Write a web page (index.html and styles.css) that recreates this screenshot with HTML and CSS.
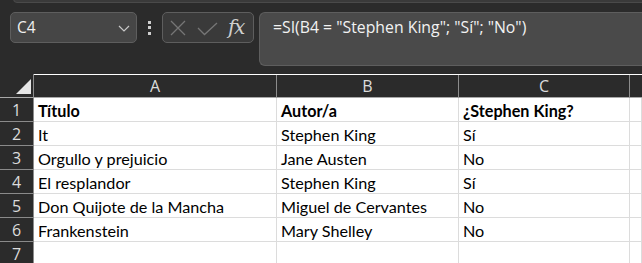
FILE: index.html
```html
<!DOCTYPE html>
<html lang="es">
<head>
<meta charset="utf-8">
<link rel="stylesheet" href="styles.css">
</head>
<body>
<div class="app">
  <div class="ribbon-edge"></div>
  <div class="toolbar">
    <div class="namebox">
      <span class="ref">C4</span>
      <svg class="chev" width="12" height="7" viewBox="0 0 12 7"><path d="M1 1 L6 6 L11 1" fill="none" stroke="#c8c8c8" stroke-width="1.2"/></svg>
    </div>
    <div class="dots"><span></span><span></span><span></span></div>
    <div class="fxbox">
      <svg class="ic-x" width="16" height="16" viewBox="0 0 16 16"><path d="M1 1 L15 15 M15 1 L1 15" stroke="#767676" stroke-width="1.3" fill="none"/></svg>
      <svg class="ic-ok" width="21" height="14" viewBox="0 0 21 14"><path d="M1 6 L7.5 12.5 L20 1" stroke="#767676" stroke-width="1.3" fill="none"/></svg>
      <span class="fx">fx</span>
    </div>
    <div class="formula">=SI(B4 = "Stephen King"; "Sí"; "No")</div>
  </div>
  <div class="grid">
    <div class="corner"><div class="tri"></div></div>
    <div class="ch">A</div>
    <div class="ch">B</div>
    <div class="ch">C</div>
    <div class="ch last"></div>

    <div class="rh">1</div>
    <div class="c b">Título</div>
    <div class="c b">Autor/a</div>
    <div class="c b">¿Stephen King?</div>
    <div class="c"></div>

    <div class="rh">2</div>
    <div class="c">It</div>
    <div class="c">Stephen King</div>
    <div class="c">Sí</div>
    <div class="c"></div>

    <div class="rh">3</div>
    <div class="c">Orgullo y prejuicio</div>
    <div class="c">Jane Austen</div>
    <div class="c">No</div>
    <div class="c"></div>

    <div class="rh">4</div>
    <div class="c">El resplandor</div>
    <div class="c">Stephen King</div>
    <div class="c">Sí</div>
    <div class="c"></div>

    <div class="rh">5</div>
    <div class="c">Don Quijote de la Mancha</div>
    <div class="c">Miguel de Cervantes</div>
    <div class="c">No</div>
    <div class="c"></div>

    <div class="rh">6</div>
    <div class="c">Frankenstein</div>
    <div class="c">Mary Shelley</div>
    <div class="c">No</div>
    <div class="c"></div>

    <div class="rh">7</div>
    <div class="c"></div>
    <div class="c"></div>
    <div class="c"></div>
    <div class="c"></div>
  </div>
</div>
</body>
</html>
```
FILE: styles.css
```css
* { box-sizing: border-box; }
html, body { margin: 0; padding: 0; background: #2b2b2b; overflow: hidden; }
.app { width: 642px; height: 263px; position: relative; background: #2b2b2b; overflow: hidden; }
.ribbon-edge {
  position: absolute; left: 13px; top: -6px; right: -6px; height: 9px;
  background: #3a3a3a; border: 1px solid #4a4a4a; border-radius: 4px;
}
.toolbar {
  height: 74px; display: flex; align-items: flex-start;
  padding: 12px 0 0 10px;
  font-family: "Open Sans", "Noto Sans", sans-serif;
}
.namebox {
  width: 127px; height: 31px; border: 1px solid #5e5e5e; border-radius: 5px;
  background: #464646; display: flex; align-items: center; justify-content: space-between;
  padding: 0 6px 0 6px; color: #f0f0f0; font-size: 15.5px;
}
.namebox .ref { margin-top: -1px; }
.chev { margin-top: 2px; }
.dots { width: 25px; height: 31px; display: flex; flex-direction: column; align-items: center; justify-content: center; gap: 2.5px; }
.dots span { width: 3px; height: 3px; background: #cfcfcf; display: block; }
.fxbox {
  width: 92px; height: 31px; border: 1px solid #5e5e5e; border-radius: 5px; background: #3a3a3a;
  display: flex; align-items: center; padding: 0 0 0 7px;
}
.ic-ok { margin-left: 11px; margin-top: 2px; }
.fx { font-family: "DejaVu Serif", "Liberation Serif", serif; font-style: italic; font-size: 20px; color: #cfcfcf; margin-left: 10px; letter-spacing: -1.5px; margin-top: -2px; }
.formula {
  margin-left: 5px; flex: 1; height: 54px; border: 1px solid #5e5e5e; border-right: none; border-radius: 6px 0 0 6px;
  background: #4a4a4a; color: #f2f2f2; font-size: 15.8px; padding: 3px 0 0 13px; white-space: nowrap;
}
.grid {
  display: grid;
  grid-template-columns: 34px 243px 182px 171px 1fr;
  grid-auto-rows: 24px;
  background: #fff;
}
.corner, .ch, .rh { background: #2b2b2b; color: #dcdcdc; font-family: "Open Sans", "Noto Sans", sans-serif; }
.corner { border-right: 1px solid #8c8c8c; border-bottom: 1px solid #a8a8a8; position: relative; }
.tri {
  position: absolute; right: 2px; bottom: 3px; width: 0; height: 0;
  border-left: 15px solid transparent; border-bottom: 15px solid #e6e6e6;
}
.ch {
  border-bottom: 1px solid #a8a8a8; border-right: 1px solid #8c8c8c;
  display: flex; align-items: center; justify-content: center; font-size: 16px;
  margin-top: 1px;
}
.ch.last { border-right: none; }
.rh {
  border-right: 1px solid #8c8c8c; border-bottom: 1px solid #8a8a8a;
  display: flex; align-items: center; justify-content: center; font-size: 16px; line-height: 20px;
}
.c {
  border-right: 1px solid #dcdcdc; border-bottom: 1px solid #dcdcdc;
  font-family: "Lato", "Open Sans", sans-serif; font-size: 16.2px; color: #000;
  padding: 0 0 1px 4px; display: flex; align-items: flex-end; white-space: nowrap;
}
.c.b { font-weight: bold; }
```
